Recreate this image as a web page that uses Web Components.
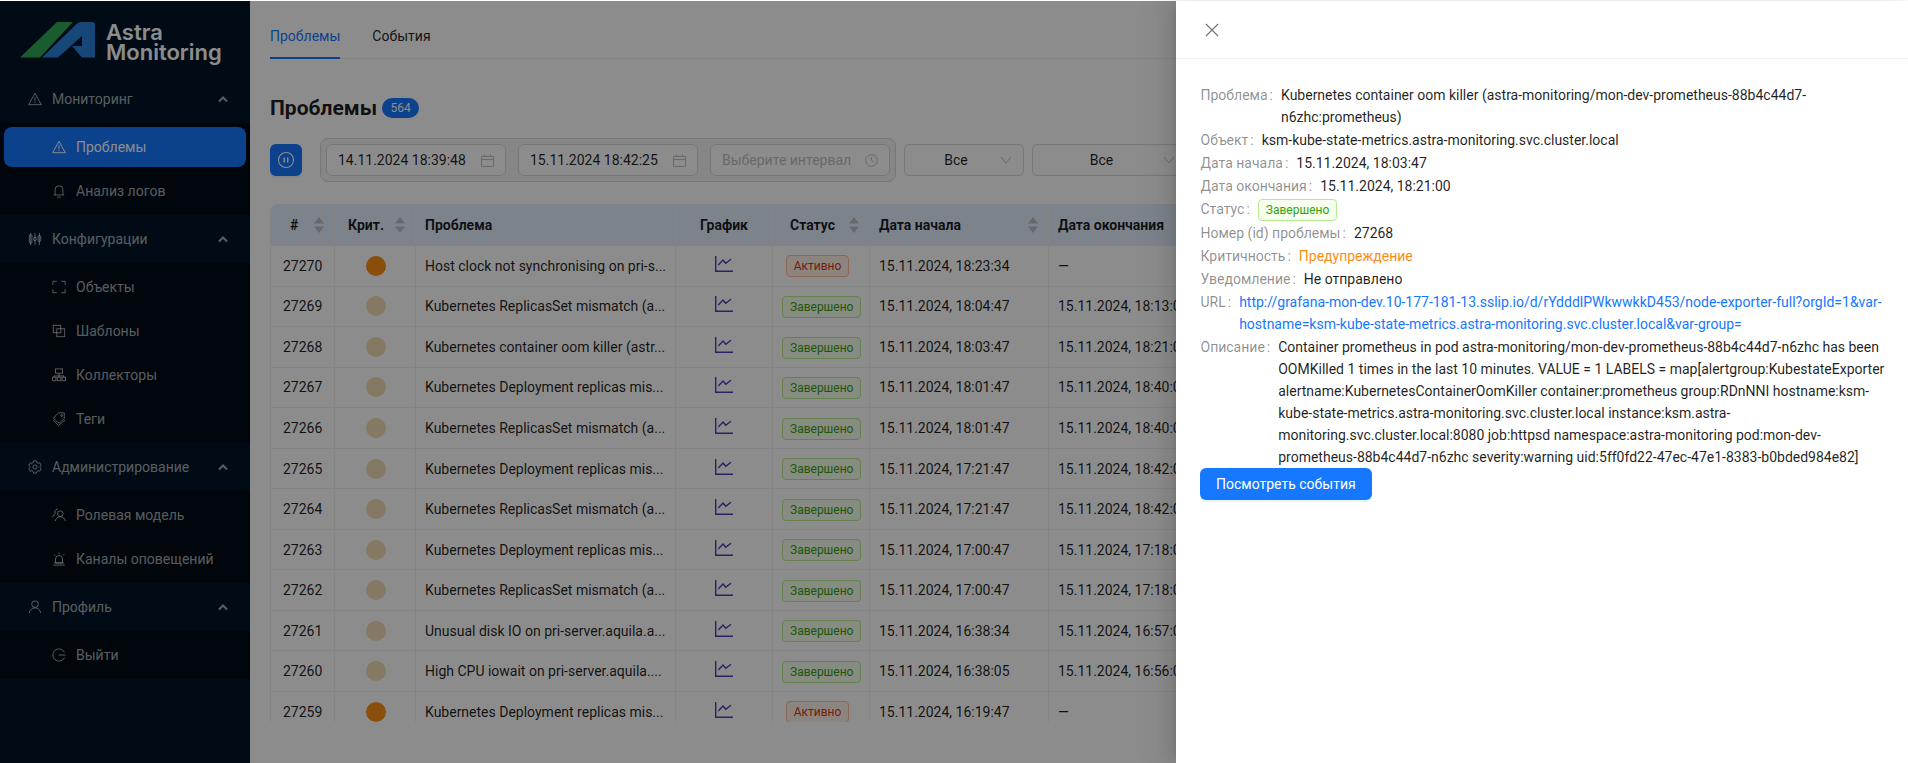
<!DOCTYPE html>
<html lang="ru">
<head>
<meta charset="utf-8">
<title>Astra Monitoring</title>
<style>
  html, body { margin: 0; height: 100%; }
  body { font: 14px/22px Roboto, "Liberation Sans", sans-serif; color: rgba(0,0,0,.88); background: #fff; overflow: hidden; }
  app-shell { height: 763px; }
</style>
</head>
<body>
<app-shell>
  <side-nav slot="nav"></side-nav>
  <problems-page slot="main"></problems-page>
  <detail-drawer slot="drawer"></detail-drawer>
</app-shell>

<script>
const ICONS = {
  warn: '<path d="M8 1.5 .8 14.5h14.4Z" stroke-linejoin="round"/><path d="M8 6v4.5M8 11.5v1.2"/>',
  bell: '<path d="M3.5 12.5V6.5a4.5 4.5 0 0 1 9 0v6M2 12.5h12M6 15h4"/>',
  sliders: '<path d="M3 1v14M8 1v14M13 1v14"/><rect x="1.5" y="3" width="3" height="10" rx="1.5"/><rect x="6.5" y="6" width="3" height="4" rx="1.5"/><rect x="11.5" y="4" width="3" height="7" rx="1.5"/>',
  frame: '<path d="M1 5.5V1.5h4.5M10.5 1.5H15v4M15 10.5v4h-4.5M5.5 14.5H1v-4"/>',
  copy: '<rect x="1.5" y="1.5" width="8.5" height="8.5"/><rect x="5.5" y="5.5" width="9" height="9"/>',
  tree: '<rect x="4" y="1" width="8" height="5"/><path d="M8 6v3M2.5 9h11M2.5 9v1.5M8 9v1.5M13.5 9v1.5"/><rect x=".5" y="10.5" width="4" height="4"/><rect x="6" y="10.5" width="4" height="4"/><rect x="11.5" y="10.5" width="4" height="4"/>',
  tag: '<path d="M1.5 7 7.5 1H14v6.5L8 13Z" stroke-linejoin="round"/><circle cx="11" cy="4" r="1"/><path d="M1.5 9.5 7.5 15.5 15 9"/>',
  gear: '<path d="M6.4 1h3.2l.5 1.9 1.5.9 1.9-.6 1.6 2.8-1.4 1.3v1.4l1.4 1.3-1.6 2.8-1.9-.6-1.5.9-.5 1.9H6.4l-.5-1.9-1.5-.9-1.900.6L.9 10l1.400-1.300V7.300L.9 6l1.600-2.800 1.900.6 1.500-.9Z" stroke-linejoin="round"/><circle cx="8" cy="8" r="2.4"/>',
  roles: '<circle cx="9.5" cy="6.5" r="3.2"/><path d="M3.8 15c.4-3 2.700-5 5.700-5s5.300 2 5.700 5"/><path d="M6.500 1.200a3 3 0 0 0-2.500 5C2.300 7.200 1.200 8.800 1 10.500"/>',
  siren: '<path d="M4 12.500V8a4 4 0 0 1 8 0v4.500ZM1.500 15h13M2.500 12.500h11M8 .5v2M2 2.500l1.500 1.500M14 2.500l-1.500 1.500"/>',
  user: '<circle cx="8" cy="4.800" r="3.800"/><path d="M1.500 15c.4-3.500 3-6 6.500-6s6.100 2.500 6.500 6"/>',
  exit: '<path d="M14.300 5A7 7 0 1 0 14.300 11M7.500 8H15.500"/>'
};
const svg = (name, size) => `<svg width="${size}" height="${size}" viewBox="0 0 16 16" fill="none" stroke="currentColor" stroke-width="1.1" aria-hidden="true">${ICONS[name]}</svg>`;

class NavGroup extends HTMLElement {
  connectedCallback() {
    const items = JSON.parse(this.getAttribute("items"));
    this.attachShadow({ mode: "open" }).innerHTML = `
      <style>
        :host { display: block; }
        .head { height: 48px; display: flex; align-items: center; padding: 0 22px 0 28px; gap: 10px; color: rgba(255,255,255,.65); }
        .head span { flex: 1; }
        .chev { width: 10px; height: 10px; }
        .sub { background: #000c17; padding: 4px 0; display: flex; flex-direction: column; gap: 4px; }
        .item { height: 40px; margin: 0 4px; padding: 0 0 0 48px; border-radius: 8px; display: flex; align-items: center; gap: 10px; color: rgba(255,255,255,.65); }
        .item.on { background: #1677ff; color: #fff; }
        svg { flex: none; }
      </style>
      <div class="head">${svg(this.getAttribute("icon"), 14)}<span>${this.getAttribute("label")}</span>
        <svg class="chev" viewBox="0 0 10 10" fill="none" stroke="currentColor" stroke-width="2"><path d="M1 7.5l4-4 4 4"/></svg></div>
      <div class="sub">${items.map(i => `<div class="item${i[2] ? " on" : ""}">${svg(i[1], 14)}${i[0]}</div>`).join("")}</div>`;
  }
}
customElements.define("nav-group", NavGroup);

class SideNav extends HTMLElement {
  connectedCallback() {
    const groups = [
      ["Мониторинг", "warn", [["Проблемы", "warn", 1], ["Анализ логов", "bell"]]],
      ["Конфигурации", "sliders", [["Объекты", "frame"], ["Шаблоны", "copy"], ["Коллекторы", "tree"], ["Теги", "tag"]]],
      ["Администрирование", "gear", [["Ролевая модель", "roles"], ["Каналы оповещений", "siren"]]],
      ["Профиль", "user", [["Выйти", "exit"]]]
    ];
    this.attachShadow({ mode: "open" }).innerHTML = `
      <style>
        :host { display: block; width: 250px; height: 100%; background: #001529; color: #fff; }
        .logo { height: 74px; display: flex; align-items: flex-start; padding: 21px 0 0 20px; gap: 11px; box-sizing: border-box; }
        .name { font: 600 22px/20px Inter, Roboto, sans-serif; color: #fff; margin-top: 0; }
        .name div { height: 20px; }
      </style>
      <div class="logo">
        <svg width="75" height="36" viewBox="0 0 75 36">
          <path d="M0 35.5 37 0H53L20 35.5Z" fill="#30a858"/>
          <path fill-rule="evenodd" d="M22 35.5 57 1.5Q59 0 61 0H72Q75 0 75 3V35.5H62L52 24H62V14L38 35.5Z" fill="#2a82dc"/>
        </svg>
        <div class="name"><div>Astra</div><div>Monitoring</div></div>
      </div>
      ${groups.map(g => `<nav-group label="${g[0]}" icon="${g[1]}" items='${JSON.stringify(g[2])}'></nav-group>`).join("")}`;
  }
}
customElements.define("side-nav", SideNav);

class StatusTag extends HTMLElement {
  connectedCallback() {
    this.attachShadow({ mode: "open" }).innerHTML = `
      <style>
        :host { display: inline-block; vertical-align: middle; font-size: 12px; line-height: 20px; padding: 0 7px; border-radius: 4px; border: 1px solid #b7eb8f; background: #f6ffed; color: #389e0d; }
        :host([kind=err]) { border-color: #ffbb96; background: #fff2e8; color: #d4380d; margin-right: 7px; }
      </style><slot></slot>`;
  }
}
customElements.define("status-tag", StatusTag);

class ProblemsTable extends HTMLElement {
  connectedCallback() {
    const rows = [
      [27270, "Host clock not synchronising on pri-s...", 1, "18:23:34", ""],
      [27269, "Kubernetes ReplicasSet mismatch (a...", 0, "18:04:47", "18:13:00"],
      [27268, "Kubernetes container oom killer (astr...", 0, "18:03:47", "18:21:00"],
      [27267, "Kubernetes Deployment replicas mis...", 0, "18:01:47", "18:40:00"],
      [27266, "Kubernetes ReplicasSet mismatch (a...", 0, "18:01:47", "18:40:00"],
      [27265, "Kubernetes Deployment replicas mis...", 0, "17:21:47", "18:42:00"],
      [27264, "Kubernetes ReplicasSet mismatch (a...", 0, "17:21:47", "18:42:00"],
      [27263, "Kubernetes Deployment replicas mis...", 0, "17:00:47", "17:18:00"],
      [27262, "Kubernetes ReplicasSet mismatch (a...", 0, "17:00:47", "17:18:00"],
      [27261, "Unusual disk IO on pri-server.aquila.a...", 0, "16:38:34", "16:57:00"],
      [27260, "High CPU iowait on pri-server.aquila....", 0, "16:38:05", "16:56:00"],
      [27259, "Kubernetes Deployment replicas mis...", 1, "16:19:47", ""]
    ];
    const sort = '<svg class="sort" width="10" height="16" viewBox="0 0 10 16" fill="#bfbfbf"><path d="M5 0 10 6.5H0ZM5 16 0 9.5H10Z"/></svg>';
    const chart = '<svg width="18" height="16" viewBox="0 0 18 16" fill="none" stroke="#4b3fb5" stroke-width="1.4"><path d="M.7 0V15.3H18M3.3 9 8 4l2.700 3.300L16 3.300"/></svg>';
    this.attachShadow({ mode: "open" }).innerHTML = `
      <style>
        :host { display: block; height: 518px; overflow: hidden; }
        table { border-collapse: separate; border-spacing: 0; table-layout: fixed; width: 1101px; }
        th { background: #e2eefc; font-weight: 700; text-align: left; height: 42px; padding: 0 9px; border-right: 1px solid #f0f0f0; box-sizing: border-box; position: relative; white-space: nowrap; }
        th:first-child { border-top-left-radius: 8px; border-left: 1px solid #f0f0f0; padding-left: 19px; }
        td { height: 40.55px; padding: 0 9px; box-sizing: border-box; border-bottom: 1px solid #f0f0f0; border-right: 1px solid #f0f0f0; white-space: nowrap; overflow: hidden; }
        td:first-child { border-left: 1px solid #f0f0f0; padding-left: 12px; }
        .sort { position: absolute; right: 10px; top: 13px; }
        .c { text-align: center; }
        i { display: block; width: 20px; height: 20px; border-radius: 50%; margin: auto; position: relative; left: .5px; }
        i.on { background: #fa8c16; }
        i.off { background: #f5dcb4; }
        td svg { display: block; margin: -4px auto 0; }
      </style>
      <table>
        <colgroup><col style="width:65px"><col style="width:81px"><col style="width:260px"><col style="width:97px"><col style="width:97px"><col style="width:179px"><col style="width:322px"></colgroup>
        <tr><th>#${sort}</th><th class="c" style="padding-right:27px">Крит.${sort}</th><th>Проблема</th><th class="c">График</th><th class="c" style="padding-right:26px">Статус${sort}</th><th>Дата начала${sort}</th><th>Дата окончания</th></tr>
        ${rows.map(r => `<tr><td>${r[0]}</td><td><i class="${r[2] ? "on" : "off"}"></i></td><td>${r[1]}</td><td>${chart}</td><td class="c"><status-tag ${r[2] ? 'kind="err"' : ""}>${r[2] ? "Активно" : "Завершено"}</status-tag></td><td>15.11.2024, ${r[3]}</td><td>${r[4] ? "15.11.2024, " + r[4] : "—"}</td></tr>`).join("")}
      </table>`;
  }
}
customElements.define("problems-table", ProblemsTable);

class FilterBar extends HTMLElement {
  connectedCallback() {
    const cal = '<svg width="13" height="13" viewBox="0 0 13 13" fill="none" stroke="#bfbfbf"><path d="M.5 2.5h12v10H.5ZM.5 5.5h12M3.5.5v2M9.5.5v2"/></svg>';
    const clock = '<svg width="13" height="13" viewBox="0 0 13 13" fill="none" stroke="#bfbfbf"><circle cx="6.5" cy="6.5" r="5.8"/><path d="M6.5 3v3.5l2.200 1.500"/></svg>';
    const down = '<svg width="12" height="12" viewBox="0 0 12 12" fill="none" stroke="#bfbfbf"><path d="M1 3l5 6 5-6"/></svg>';
    this.attachShadow({ mode: "open" }).innerHTML = `
      <style>
        :host { display: flex; align-items: center; gap: 8px; }
        .pause { width: 32px; height: 32px; border-radius: 6px; background: #1677ff; display: grid; place-items: center; box-shadow: 0 2px 0 rgba(5,145,255,.1); margin-right: 10px; flex: none; }
        .range { display: flex; gap: 12px; padding: 5px; border: 1px solid #d9d9d9; background: #f5f5f5; border-radius: 8px; flex: none; }
        .inp { width: 180px; height: 32px; box-sizing: border-box; border: 1px solid #d9d9d9; border-radius: 6px; background: #fff; padding: 0 11px; display: flex; align-items: center; justify-content: space-between; }
        .ph { color: #bfbfbf; }
        .sel { height: 32px; width: 120px; box-sizing: border-box; border: 1px solid #d9d9d9; border-radius: 6px; background: #fff; padding: 0 11px; display: flex; align-items: center; gap: 4px; flex: none; }
        .sel span { flex: 1; text-align: center; }
        .big { width: 155px; }
      </style>
      <div class="pause"><svg width="18" height="18" viewBox="0 0 18 18" fill="none" stroke="#fff" stroke-width="1.1"><circle cx="9" cy="9" r="7.5"/><path d="M7.3 6.5v5M10.7 6.5v5" stroke-width="1.5"/></svg></div>
      <div class="range">
        <div class="inp">14.11.2024 18:39:48${cal}</div>
        <div class="inp">15.11.2024 18:42:25${cal}</div>
        <div class="inp ph">Выберите интервал${clock}</div>
      </div>
      <div class="sel"><span>Все</span>${down}</div>
      <div class="sel big"><span>Все</span>${down}</div>`;
  }
}
customElements.define("filter-bar", FilterBar);

class ProblemsPage extends HTMLElement {
  connectedCallback() {
    this.attachShadow({ mode: "open" }).innerHTML = `
      <style>
        :host { display: block; flex: 1; min-width: 0; padding: 0 0 0 20px; overflow: hidden; }
        .tabs { display: flex; gap: 32px; height: 58px; border-bottom: 1px solid #f0f0f0; box-sizing: border-box; align-items: stretch; }
        .tabs div { display: flex; align-items: center; padding-top: 11px; height: 58px; box-sizing: border-box; }
        .tabs .on { color: #1677ff; box-shadow: inset 0 -2px #1677ff; }
        h2 { margin: 35px 0 0; font-size: 21px; line-height: 28px; font-weight: 700; display: flex; align-items: center; gap: 5px; }
        .count { font-size: 12px; font-weight: 400; color: #fff; background: #1677ff; border-radius: 10px; width: 37px; text-align: center; line-height: 20px; }
        filter-bar { margin-top: 16px; }
        problems-table { margin-top: 22px; }
      </style>
      <div class="tabs"><div class="on">Проблемы</div><div>События</div></div>
      <h2>Проблемы <span class="count">564</span></h2>
      <filter-bar></filter-bar>
      <problems-table></problems-table>`;
  }
}
customElements.define("problems-page", ProblemsPage);

class InfoRow extends HTMLElement {
  connectedCallback() {
    this.attachShadow({ mode: "open" }).innerHTML = `
      <style>
        :host { display: flex; line-height: 22px; margin-bottom: 1px; }
        :host(:last-child) { margin-bottom: 0; }
        .k { color: rgba(0,0,0,.45); flex: none; margin-right: 8px; }
        .k::after { content: ":"; margin: 0 0 0 2px; }
        .v { min-width: 0; }
      </style>
      <div class="k">${this.getAttribute("label")}</div><div class="v"><slot></slot></div>`;
  }
}
customElements.define("info-row", InfoRow);

class DetailDrawer extends HTMLElement {
  connectedCallback() {
    this.attachShadow({ mode: "open" }).innerHTML = `
      <style>
        :host { position: absolute; top: 0; right: 0; bottom: 0; width: 732px; background: #fff; box-shadow: -6px 0 16px rgba(0,0,0,.08), -3px 0 6px -4px rgba(0,0,0,.12), -9px 0 28px 8px rgba(0,0,0,.05); }
        .head { height: 58px; box-sizing: border-box; border-bottom: 1px solid #f0f0f0; display: flex; align-items: center; padding-left: 29px; }
        .body { padding: 25px 20px 0 24.5px; }
        .btn { display: inline-block; height: 32px; line-height: 32px; padding: 0 16px; margin-left: -.5px; background: #1677ff; color: #fff; border-radius: 6px; box-shadow: 0 2px 0 rgba(5,145,255,.1); }
      </style>
      <div class="head"><svg width="14" height="14" viewBox="0 0 14 14" stroke="#737373" stroke-width="1.1"><path d="M1 1l12 12M13 1 1 13"/></svg></div>
      <div class="body"><div><slot></slot></div><div class="btn">Посмотреть события</div></div>`;
    this.innerHTML = `
      <info-row label="Проблема">Kubernetes container oom killer (astra-monitoring/mon-dev-prometheus-88b4c44d7-n6zhc:prometheus)</info-row>
      <info-row label="Объект">ksm-kube-state-metrics.astra-monitoring.svc.cluster.local</info-row>
      <info-row label="Дата начала">15.11.2024, 18:03:47</info-row>
      <info-row label="Дата окончания">15.11.2024, 18:21:00</info-row>
      <info-row label="Статус"><status-tag>Завершено</status-tag></info-row>
      <info-row label="Номер (id) проблемы">27268</info-row>
      <info-row label="Критичность"><span style="color:#fa8c16">Предупреждение</span></info-row>
      <info-row label="Уведомление">Не отправлено</info-row>
      <info-row label="URL"><span style="color:#1677ff">http://grafana-mon-dev.10-177-181-13.sslip.io/d/rYdddlPWkwwkkD453/node-exporter-full?orgId=1&amp;var-hostname=ksm-kube-state-metrics.astra-monitoring.svc.cluster.local&amp;var-group=</span></info-row>
      <info-row label="Описание">Container prometheus in pod astra-monitoring/mon-dev-prometheus-88b4c44d7-n6zhc has been OOMKilled 1 times in the last 10 minutes. VALUE = 1 LABELS = map[alertgroup:KubestateExporter alertname:KubernetesContainerOomKiller container:prometheus group:RDnNNI hostname:ksm-kube-state-metrics.astra-monitoring.svc.cluster.local instance:ksm.astra-monitoring.svc.cluster.local:8080 job:httpsd namespace:astra-monitoring pod:mon-dev-prometheus-88b4c44d7-n6zhc severity:warning uid:5ff0fd22-47ec-47e1-8383-b0bded984e82]</info-row>`;
  }
}
customElements.define("detail-drawer", DetailDrawer);

class AppShell extends HTMLElement {
  constructor() {
    super();
    this.attachShadow({ mode: "open" }).innerHTML = `
      <style>
        :host { display: block; position: relative; overflow: hidden; box-sizing: border-box; padding-top: 1px; background: #fff; }
        .frame { display: flex; height: 100%; }
        .mask { position: absolute; inset: 1px 0 0 0; background: rgba(0,0,0,.45); }
        .top { position: absolute; inset: 1px 0 0 0; }
      </style>
      <div class="frame"><slot name="nav"></slot><slot name="main"></slot></div>
      <div class="mask"></div>
      <div class="top"><slot name="drawer"></slot></div>`;
  }
}
customElements.define("app-shell", AppShell);
</script>
</body>
</html>
